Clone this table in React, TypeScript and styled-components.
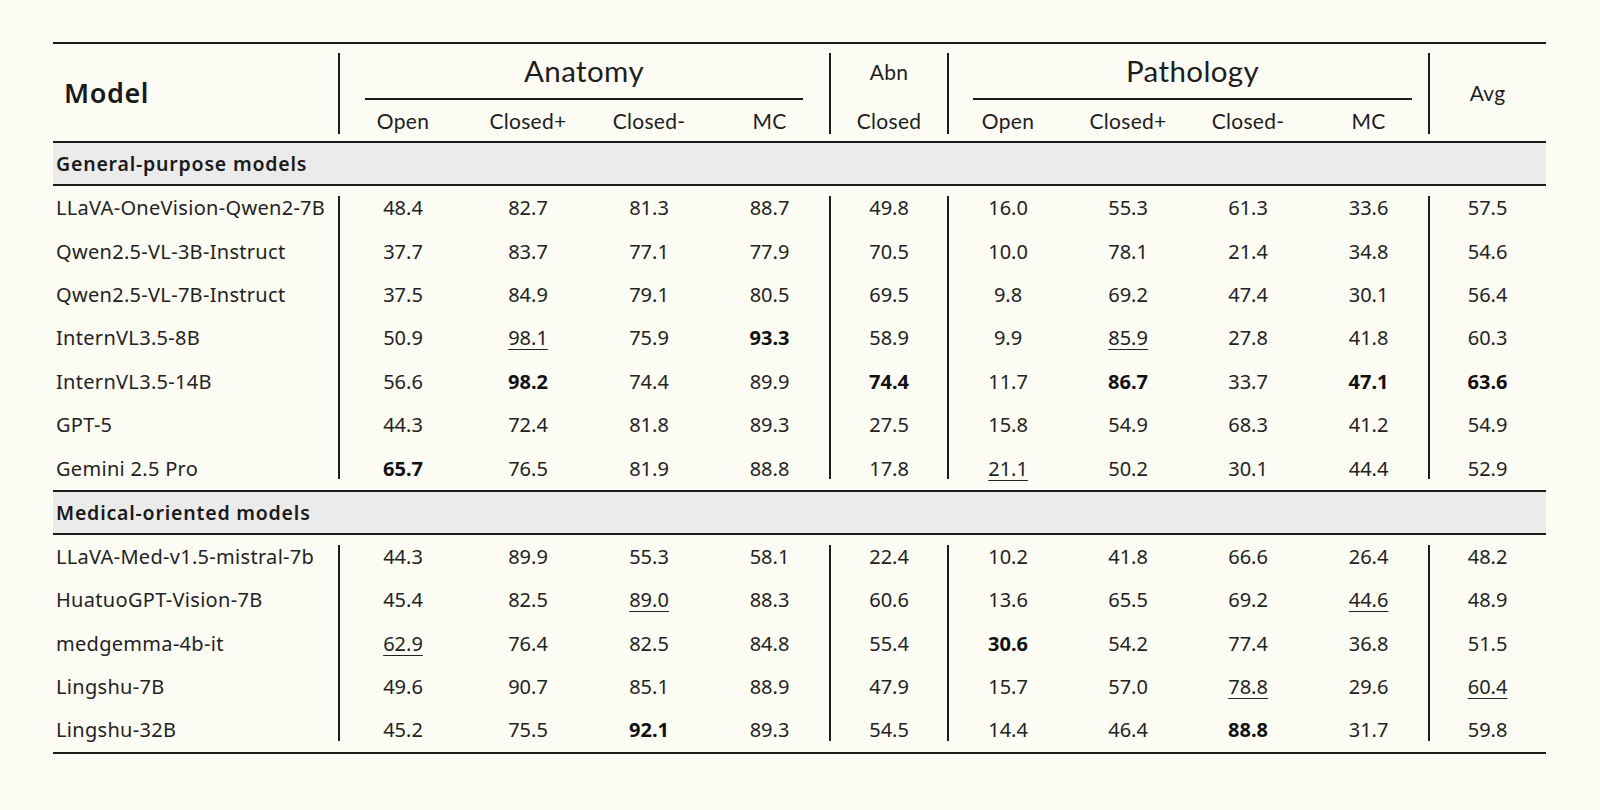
import { createGlobalStyle, styled } from 'styled-components';

type Row = { name: string; values: string[] };

// "*" = best (bold), "_" = second best (underlined)
const general: Row[] = [
  { name: 'LLaVA-OneVision-Qwen2-7B', values: ['48.4', '82.7', '81.3', '88.7', '49.8', '16.0', '55.3', '61.3', '33.6', '57.5'] },
  { name: 'Qwen2.5-VL-3B-Instruct', values: ['37.7', '83.7', '77.1', '77.9', '70.5', '10.0', '78.1', '21.4', '34.8', '54.6'] },
  { name: 'Qwen2.5-VL-7B-Instruct', values: ['37.5', '84.9', '79.1', '80.5', '69.5', '9.8', '69.2', '47.4', '30.1', '56.4'] },
  { name: 'InternVL3.5-8B', values: ['50.9', '_98.1', '75.9', '*93.3', '58.9', '9.9', '_85.9', '27.8', '41.8', '60.3'] },
  { name: 'InternVL3.5-14B', values: ['56.6', '*98.2', '74.4', '89.9', '*74.4', '11.7', '*86.7', '33.7', '*47.1', '*63.6'] },
  { name: 'GPT-5', values: ['44.3', '72.4', '81.8', '89.3', '27.5', '15.8', '54.9', '68.3', '41.2', '54.9'] },
  { name: 'Gemini 2.5 Pro', values: ['*65.7', '76.5', '81.9', '88.8', '17.8', '_21.1', '50.2', '30.1', '44.4', '52.9'] },
];

const medical: Row[] = [
  { name: 'LLaVA-Med-v1.5-mistral-7b', values: ['44.3', '89.9', '55.3', '58.1', '22.4', '10.2', '41.8', '66.6', '26.4', '48.2'] },
  { name: 'HuatuoGPT-Vision-7B', values: ['45.4', '82.5', '_89.0', '88.3', '60.6', '13.6', '65.5', '69.2', '_44.6', '48.9'] },
  { name: 'medgemma-4b-it', values: ['_62.9', '76.4', '82.5', '84.8', '55.4', '*30.6', '54.2', '77.4', '36.8', '51.5'] },
  { name: 'Lingshu-7B', values: ['49.6', '90.7', '85.1', '88.9', '47.9', '15.7', '57.0', '_78.8', '29.6', '_60.4'] },
  { name: 'Lingshu-32B', values: ['45.2', '75.5', '*92.1', '89.3', '54.5', '14.4', '46.4', '*88.8', '31.7', '59.8'] },
];

// value columns that get a rule on their left edge
const dividers = new Set([0, 4, 5, 9]);
const colWidths = [128, 122, 120, 121, 118, 120, 120, 120, 121, 117];

const GlobalStyle = createGlobalStyle`
  body {
    margin: 0;
    background: #fcfcf4;
    color: #232323;
    font-family: 'Noto Sans', sans-serif;
  }
`;

const Page = styled.div`
  padding: 42px 0 0 53px;
`;

const Table = styled.table`
  border-collapse: collapse;
  table-layout: fixed;
  width: 1493px;
  border-top: 2px solid #1c1c1c;
  border-bottom: 2px solid #1c1c1c;
`;

const HeadCell = styled.th<{ $line?: boolean; $lineTop?: number; $lineBottom?: number; $height?: number; $bottom?: boolean }>`
  position: relative;
  padding: 0;
  height: ${(p) => p.$height ?? 41}px;
  font-weight: 400;
  text-align: center;
  vertical-align: ${(p) => (p.$bottom ? 'bottom' : 'middle')};
  color: #1e1e1e;

  &::before {
    content: '';
    display: ${(p) => (p.$line ? 'block' : 'none')};
    position: absolute;
    left: -1px;
    top: ${(p) => p.$lineTop ?? 0}px;
    bottom: ${(p) => p.$lineBottom ?? 0}px;
    width: 2px;
    background: #1c1c1c;
  }
`;

const ModelHead = styled.th`
  position: relative;
  padding: 0 0 0 11px;
  text-align: left;
  font-family: 'Noto Sans', sans-serif;
  font-size: 27px;
  font-weight: 600;
  letter-spacing: 0.6px;
  color: #1a1a1a;
`;

const GroupTitle = styled.div<{ $inset: string }>`
  margin: ${(p) => p.$inset};
  padding-bottom: 9px;
  line-height: 36px;
  border-bottom: 2px solid #1c1c1c;
  font-family: 'Lato', sans-serif;
  font-size: 29.5px;
  letter-spacing: 0.4px;
`;

const SubTitle = styled.span`
  font-family: 'Lato', sans-serif;
  font-size: 21px;
  letter-spacing: 0.3px;
`;

const SectionCell = styled.td`
  height: 41px;
  padding: 0 0 0 3px;
  background: #ebebeb;
  border-top: 2px solid #1c1c1c;
  border-bottom: 2px solid #1c1c1c;
  font-size: 19.5px;
  font-weight: 600;
  letter-spacing: 0.8px;
  color: #1a1a1a;
`;

const NameCell = styled.td`
  height: 43.4px;
  padding: 0 0 0 3px;
  font-size: 20px;
  font-weight: 400;
  white-space: nowrap;
  letter-spacing: 0.3px;
`;

const ValueCell = styled.td<{ $line?: boolean; $first?: boolean; $last?: boolean }>`
  position: relative;
  padding: 0;
  text-align: center;
  font-size: 20px;

  &::before {
    content: '';
    display: ${(p) => (p.$line ? 'block' : 'none')};
    position: absolute;
    left: -1px;
    top: ${(p) => (p.$first ? 10 : 0)}px;
    bottom: ${(p) => (p.$last ? 11 : 0)}px;
    width: 2px;
    background: #1c1c1c;
  }
`;

const Num = styled.span<{ $bold?: boolean; $under?: boolean }>`
  font-weight: ${(p) => (p.$bold ? 700 : 400)};
  color: ${(p) => (p.$bold ? '#111' : 'inherit')};
  text-decoration: ${(p) => (p.$under ? 'underline' : 'none')};
  text-decoration-thickness: 1px;
  text-underline-offset: 4px;
`;

function Value({ raw }: { raw: string }) {
  const bold = raw.startsWith('*');
  const under = raw.startsWith('_');
  const text = bold || under ? raw.slice(1) : raw;
  return (
    <Num $bold={bold} $under={under}>
      {text}
    </Num>
  );
}

function Section({ title, rows }: { title: string; rows: Row[] }) {
  return (
    <>
      <tr>
        <SectionCell colSpan={11}>{title}</SectionCell>
      </tr>
      {rows.map((row, r) => (
        <tr key={row.name}>
          <NameCell>{row.name}</NameCell>
          {row.values.map((v, i) => (
            <ValueCell key={i} $line={dividers.has(i)} $first={r === 0} $last={r === rows.length - 1}>
              <Value raw={v} />
            </ValueCell>
          ))}
        </tr>
      ))}
    </>
  );
}

export default function App() {
  return (
    <Page>
      <GlobalStyle />
      <Table>
        <colgroup>
          <col style={{ width: 286 }} />
          {colWidths.map((w, i) => (
            <col key={i} style={{ width: w }} />
          ))}
        </colgroup>
        <thead>
          <tr>
            <ModelHead rowSpan={2}>Model</ModelHead>
            <HeadCell colSpan={4} $line $lineTop={9} $height={56} $bottom>
              <GroupTitle $inset="0 27px 0 26px">Anatomy</GroupTitle>
            </HeadCell>
            <HeadCell $line $lineTop={9} $height={56}>
              <SubTitle>Abn</SubTitle>
            </HeadCell>
            <HeadCell colSpan={4} $line $lineTop={9} $height={56} $bottom>
              <GroupTitle $inset="0 17px 0 25px">Pathology</GroupTitle>
            </HeadCell>
            <HeadCell rowSpan={2} $line $lineTop={9} $lineBottom={7}>
              <SubTitle>Avg</SubTitle>
            </HeadCell>
          </tr>
          <tr>
            {['Open', 'Closed+', 'Closed-', 'MC', 'Closed', 'Open', 'Closed+', 'Closed-', 'MC'].map((label, i) => (
              <HeadCell key={i} $line={i === 0 || i === 4 || i === 5} $lineBottom={7}>
                <SubTitle>{label}</SubTitle>
              </HeadCell>
            ))}
          </tr>
        </thead>
        <tbody>
          <Section title="General-purpose models" rows={general} />
          <Section title="Medical-oriented models" rows={medical} />
        </tbody>
      </Table>
    </Page>
  );
}
